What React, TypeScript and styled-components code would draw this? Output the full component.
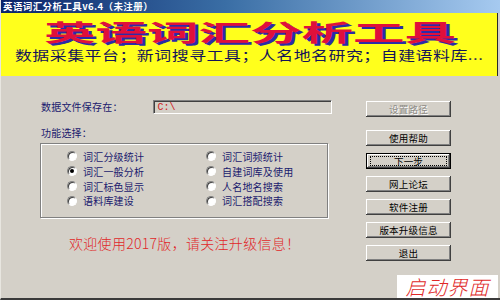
import styled, { createGlobalStyle } from "styled-components"

const GlobalStyle = createGlobalStyle`
    html, body {
        margin: 0;
        padding: 0;
        background: #d4d0c8;
    }
    body {
        font-family: "Noto Sans CJK SC", "Noto Sans", sans-serif;
    }
`

const Window = styled.div`
    position: relative;
    display: flex;
    flex-direction: column;

    width: 500px;
    height: 300px;
    box-sizing: border-box;
    overflow: hidden;

    background: #d4d0c8;
    border-left: 1px solid #e8e6e0;
    border-bottom: 2px solid #3a3a3a;
`

const TitleBar = styled.div`
    display: flex;
    align-items: center;

    height: 13px;
    padding-left: 2px;

    background: linear-gradient(to right, #0a246a 0%, #3a6ea5 45%, #a6caf0 100%);
    color: #ffffff;
    font-size: 9.5px;
    font-weight: 700;
    line-height: 13px;
    letter-spacing: 0.4px;
    white-space: nowrap;
`

const Banner = styled.div`
    display: flex;
    flex-direction: column;
    align-items: center;

    height: 63px;
    margin-right: 2px;

    background: #ffff1c;
    box-shadow: inset -1px 0 0 #2a2a2a;
`

const BigTitle = styled.div`
    margin-top: 4px;
    height: 28px;

    font-size: 23px;
    font-weight: 700;
    line-height: 28px;
    color: #e0103a;
    text-shadow: 1.5px 1.5px 0 #2b2ba8;
    white-space: nowrap;

    transform: scaleX(2.24);
    transform-origin: center;
`

const SubTitle = styled.div`
    height: 16px;
    margin-top: 2px;

    font-size: 13px;
    line-height: 16px;
    color: #14145a;
    letter-spacing: 0.4px;
    white-space: nowrap;

    transform: scaleX(1.3);
    transform-origin: center;
`

const Body = styled.div`
    display: flex;
    flex-direction: row;
    align-items: flex-start;

    padding-left: 39px;
`

const LeftColumn = styled.div`
    display: flex;
    flex-direction: column;

    width: 292px;
    padding-top: 24px;
`

const FieldRow = styled.div`
    display: flex;
    align-items: center;
    height: 14px;
`

const Label = styled.div<{ width?: number }>`
    width: ${(p) => (p.width ? `${p.width}px` : "auto")};
    padding-left: 1px;

    font-size: 10px;
    line-height: 14px;
    letter-spacing: 0.2px;
    color: #1a1a6e;
    white-space: nowrap;
`

const TextBox = styled.div`
    display: flex;
    align-items: center;

    width: 180px;
    height: 14px;
    box-sizing: border-box;
    padding-left: 4px;

    background: #d4d0c8;
    border-top: 1px solid #808080;
    border-left: 1px solid #808080;
    border-right: 1px solid #ffffff;
    border-bottom: 1px solid #ffffff;
    box-shadow: inset 1px 1px 0 #404040;

    font-family: "Liberation Mono", monospace;
    font-size: 10px;
    color: #d02020;
`

const SectionLabel = styled(Label)`
    margin-top: 12px;
`

const GroupBox = styled.div`
    display: grid;
    grid-template-columns: 139px 1fr;
    grid-auto-rows: 14.8px;

    width: 288px;
    height: 75px;
    box-sizing: border-box;
    margin-top: 3px;
    padding: 5px 0 0 26px;

    border: 1px solid #808080;
    box-shadow: 1px 1px 0 #ffffff, inset 1px 1px 0 #ffffff;
`

const RadioItem = styled.div`
    display: flex;
    align-items: center;
    gap: 6px;

    font-size: 10px;
    letter-spacing: 0.2px;
    color: #1a1a6e;
    white-space: nowrap;
`

const RadioCircle = styled.span<{ checked?: boolean }>`
    position: relative;
    display: inline-block;

    width: 10px;
    height: 10px;
    box-sizing: border-box;

    border-radius: 50%;
    background: #ffffff;
    border: 1px solid;
    border-color: #808080 #ffffff #ffffff #808080;
    box-shadow: inset 1px 1px 0 #404040;

    &::after {
        content: "";
        display: ${(p) => (p.checked ? "block" : "none")};
        position: absolute;
        left: 2px;
        top: 2px;
        width: 4px;
        height: 4px;
        border-radius: 50%;
        background: #000000;
    }
`

const Welcome = styled.div`
    margin-top: 17px;
    padding-left: 29px;

    font-size: 14px;
    font-weight: 300;
    line-height: 16px;
    letter-spacing: 0.3px;
    color: #e02828;
    white-space: nowrap;
`

const RightColumn = styled.div`
    display: flex;
    flex-direction: column;
    gap: 7px;

    margin-left: 34px;
    padding-top: 25px;
`

const Button = styled.div<{ disabled?: boolean; focused?: boolean; spaced?: boolean }>`
    position: relative;
    display: flex;
    align-items: center;
    justify-content: center;

    width: 85px;
    height: 16px;
    box-sizing: border-box;
    margin-bottom: ${(p) => (p.spaced ? "6px" : "0")};

    background: #d4d0c8;
    box-shadow: ${(p) =>
        p.focused
            ? "inset 0 0 0 1px #000, inset -2px -2px 0 #404040, inset 2px 2px 0 #fff, inset -3px -3px 0 #808080"
            : "inset -1px -1px 0 #404040, inset 1px 1px 0 #ffffff, inset -2px -2px 0 #808080"};

    font-size: 9.5px;
    letter-spacing: 0.2px;
    color: ${(p) => (p.disabled ? "#8e8c86" : "#000000")};
    text-shadow: ${(p) => (p.disabled ? "1px 1px 0 #ffffff" : "none")};

    &::after {
        content: "";
        display: ${(p) => (p.focused ? "block" : "none")};
        position: absolute;
        inset: 3px 4px 3px 4px;
        border: 1px dotted #000000;
    }
`

const Stamp = styled.div`
    position: absolute;
    right: 2px;
    bottom: 0;

    width: 101px;
    height: 23px;

    background: #ffffff;
    color: #e02828;
    font-size: 20px;
    font-weight: 300;
    font-style: italic;
    line-height: 23px;
    text-align: center;
    letter-spacing: 1px;
`

const radios = [
    { label: "词汇分级统计" },
    { label: "词汇词频统计" },
    { label: "词汇一般分析", checked: true },
    { label: "自建词库及使用" },
    { label: "词汇标色显示" },
    { label: "人名地名搜索" },
    { label: "语料库建设" },
    { label: "词汇搭配搜索" },
]

const buttons = [
    { label: "设置路径", disabled: true, spaced: true },
    { label: "使用帮助" },
    { label: "下一步", focused: true },
    { label: "网上论坛" },
    { label: "软件注册" },
    { label: "版本升级信息" },
    { label: "退出" },
]

export default function App() {
    return (
        <>
            <GlobalStyle />
            <Window>
                <TitleBar>英语词汇分析工具v6.4（未注册）</TitleBar>
                <Banner>
                    <BigTitle>英语词汇分析工具</BigTitle>
                    <SubTitle>数据采集平台；新词搜寻工具；人名地名研究；自建语料库...</SubTitle>
                </Banner>
                <Body>
                    <LeftColumn>
                        <FieldRow>
                            <Label width={112}>数据文件保存在：</Label>
                            <TextBox>C:\</TextBox>
                        </FieldRow>
                        <SectionLabel>功能选择：</SectionLabel>
                        <GroupBox>
                            {radios.map(({ label, checked }) => (
                                <RadioItem key={label}>
                                    <RadioCircle checked={checked} />
                                    {label}
                                </RadioItem>
                            ))}
                        </GroupBox>
                        <Welcome>欢迎使用2017版，请关注升级信息！</Welcome>
                    </LeftColumn>
                    <RightColumn>
                        {buttons.map(({ label, disabled, focused, spaced }) => (
                            <Button
                                key={label}
                                disabled={disabled}
                                focused={focused}
                                spaced={spaced}
                            >
                                {label}
                            </Button>
                        ))}
                    </RightColumn>
                </Body>
                <Stamp>启动界面</Stamp>
            </Window>
        </>
    )
}
